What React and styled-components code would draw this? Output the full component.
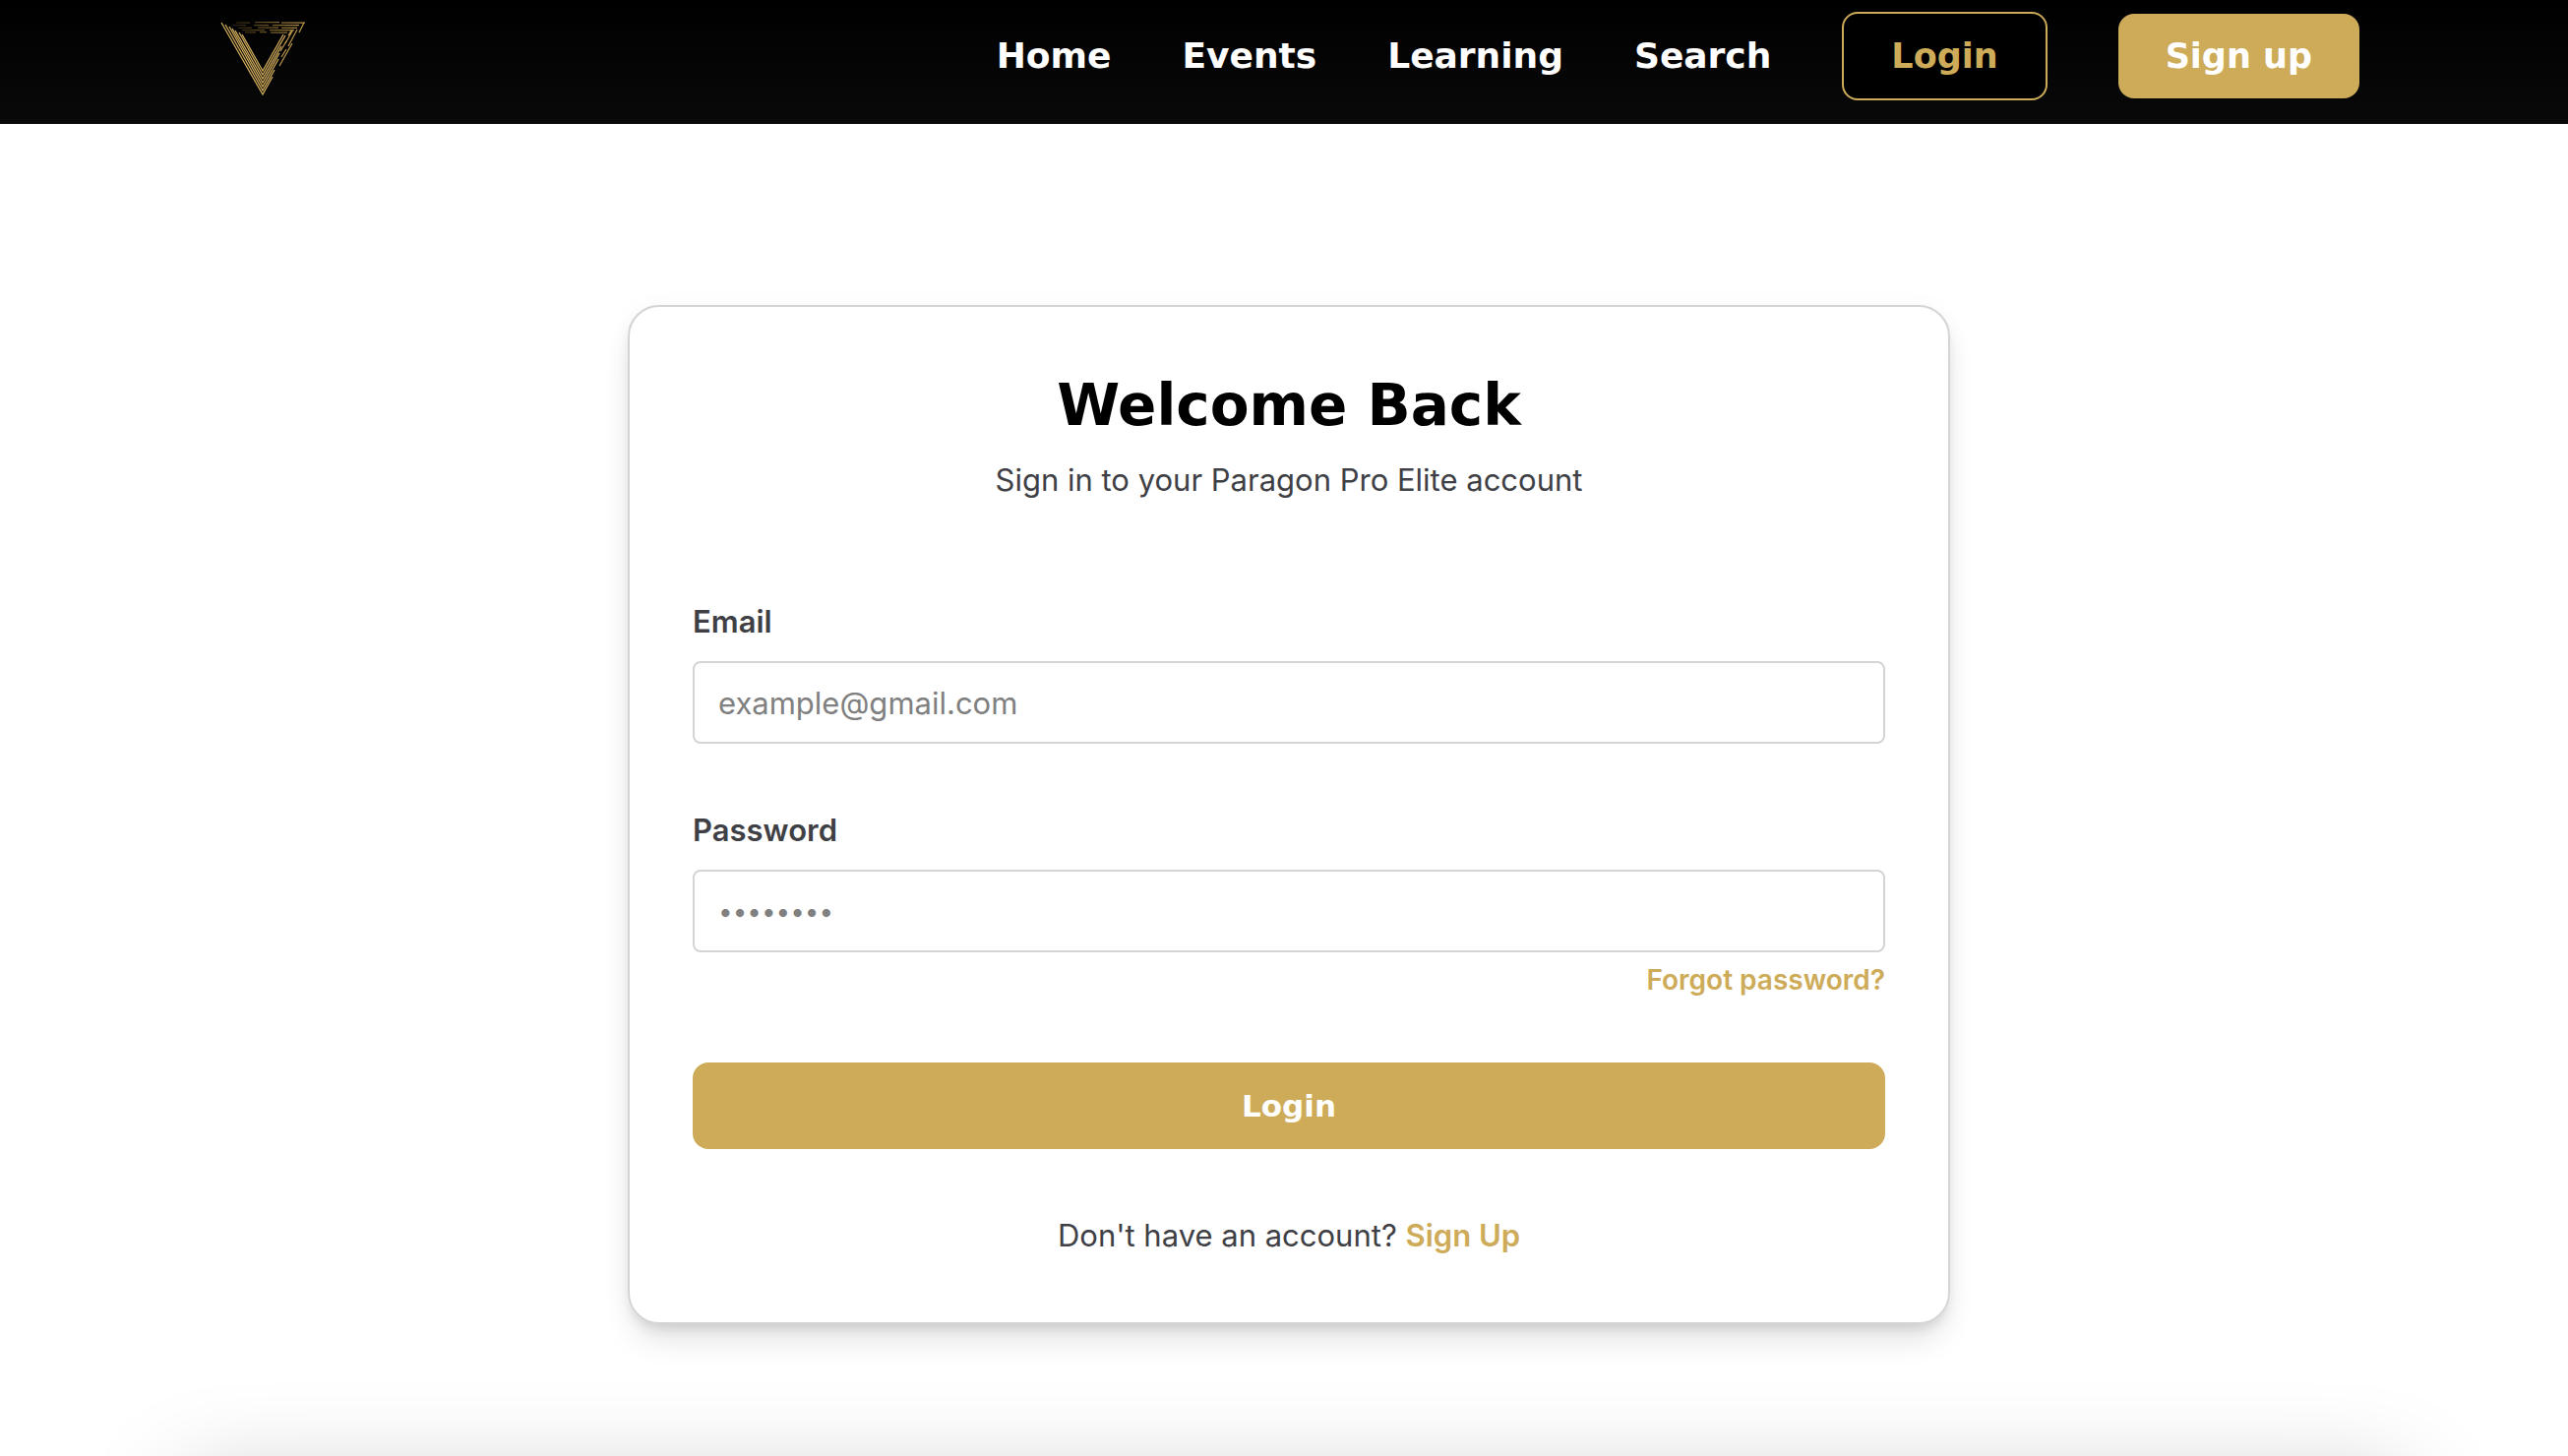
import React from "react";
import styled, { createGlobalStyle, css } from "styled-components";

const gold = "#cdab58";
const ink = "#3f3f46";
const display = '"DejaVu Sans", Verdana, sans-serif';

const GlobalStyle = createGlobalStyle`
  *, *::before, *::after { box-sizing: border-box; }
  body { margin: 0; background: #fff; color: ${ink}; font: 400 31px/48px Inter, "Open Sans", sans-serif; }
`;

const Page = styled.div`
  display: flex;
  flex-direction: column;
  min-height: 100vh;
  overflow: hidden;
`;

const Header = styled.header`
  display: flex;
  align-items: flex-start;
  justify-content: space-between;
  padding: 12px 212px 24px 222px;
  background: linear-gradient(#000, #090909);
`;

const LogoLink = styled.a`
  display: flex;
  svg { display: block; width: 90px; height: 90px; }
`;

const Nav = styled.nav`
  display: flex;
  align-items: center;
  gap: 72px;
  font: 700 36px/46px ${display};
`;

const NavLink = styled.a`
  color: #fff;
  text-decoration: none;
`;

const NavButton = styled.button`
  padding: 20px 48px;
  border: 0;
  border-radius: 16px;
  background: ${gold};
  color: #fff;
  font: 700 35px/46px ${display};
  cursor: pointer;
  ${(p) => p.$outline && css`
    border: 2px solid ${gold};
    background: #000;
    color: ${gold};
  `}
`;

const Main = styled.main`
  display: flex;
  justify-content: center;
  padding: 184px 24px 0 34px;
`;

const Card = styled.form`
  display: flex;
  flex-direction: column;
  width: 100%;
  max-width: 1344px;
  padding: 64px;
  border: 2px solid #d4d4d4;
  border-radius: 32px;
  box-shadow: 0 20px 32px -6px rgba(0, 0, 0, 0.12), 0 8px 12px -4px rgba(0, 0, 0, 0.1), 0 0 24px rgba(0, 0, 0, 0.03);
`;

const Title = styled.h1`
  margin: 0;
  color: #000;
  font: 700 58px/72px ${display};
  text-align: center;
`;

const Centered = styled.p`
  margin: 0;
  text-align: center;
`;

const Intro = styled(Centered)`
  margin: 16px 0 96px;
`;

const Field = styled.div`
  display: flex;
  flex-direction: column;
  gap: 16px;
  margin-bottom: ${(p) => (p.$last ? 0 : 64)}px;
`;

const Label = styled.label`
  font-weight: 600;
`;

const Input = styled.input`
  width: 100%;
  height: 84px;
  padding: 0 24px;
  border: 2px solid #d4d4d4;
  border-radius: 8px;
  background: #fff;
  color: ${ink};
  font: inherit;
  &::placeholder { color: #808080; opacity: 1; }
  &[type="password"] { font-size: 26px; }
`;

const TextLink = styled.a`
  color: ${gold};
  font-weight: 600;
  text-decoration: none;
`;

const ForgotLink = styled(TextLink)`
  align-self: flex-end;
  margin: 8px 0 64px;
  font-size: 28px;
  line-height: 40px;
`;

const Submit = styled.button`
  height: 88px;
  margin-bottom: 64px;
  border: 0;
  border-radius: 16px;
  background: ${gold};
  color: #fff;
  font: 700 31px/48px ${display};
  cursor: pointer;
`;

const NextSection = styled.div`
  height: 200px;
  margin: auto 170px -230px 190px;
  box-shadow: 0 0 100px rgba(0, 0, 0, 0.25);
`;

const Logo = () => (
  <svg viewBox="222 12 90 90" fill="none" strokeWidth="1.25" aria-hidden="true">
    <defs>
      <linearGradient id="topFade" gradientUnits="userSpaceOnUse" x1="236" y1="0" x2="310" y2="0">
        <stop offset="0" stopColor="#241b0a" />
        <stop offset="0.5" stopColor="#6b5426" />
        <stop offset="1" stopColor="#b8954a" />
      </linearGradient>
    </defs>
    <g stroke="#d3ae5d">
      <path d="M225 23L267 96L277 78" />
      <path d="M229 25L267 92L279 71" />
      <path d="M233 27L267 88L283 60" />
      <path d="M236 29L267 84L284 54" />
      <path d="M239 31L267 80L286 47" />
      <path d="M243 33L267 76L290 36" />
      <path d="M246 35L267 72L288 35" />
    </g>
    <g stroke="#b8954a">
      <path d="M284 67L297 44M304 33L309 23" />
      <path d="M286 58L291 50M293 47L302 30M285 52L291 42" />
      <path d="M290 44L298 30M293 36L297 30" />
    </g>
    <g stroke="url(#topFade)">
      <path d="M240 23H254M259 22.6H284M286 23H310" />
      <path d="M237 25.6H250M258 25.5H273M277 25.6H304" />
      <path d="M242 28.3H256M262 28.2H283M286 28.3H302" />
      <path d="M246 30.6H269M274 30.5H299" />
      <path d="M249 32.8H260M264 32.7H271M275 33.2H292" />
    </g>
  </svg>
);

export default function App() {
  return (
    <>
      <GlobalStyle />
      <Page>
        <Header>
          <LogoLink href="#" aria-label="Paragon Pro Elite"><Logo /></LogoLink>
          <Nav>
            {["Home", "Events", "Learning", "Search"].map((name) => (
              <NavLink key={name} href="#">{name}</NavLink>
            ))}
            <NavButton type="button" $outline>Login</NavButton>
            <NavButton type="button">Sign up</NavButton>
          </Nav>
        </Header>
        <Main>
          <Card onSubmit={(e) => e.preventDefault()}>
            <Title>Welcome Back</Title>
            <Intro>Sign in to your Paragon Pro Elite account</Intro>
            <Field>
              <Label htmlFor="email">Email</Label>
              <Input id="email" type="email" placeholder="example@gmail.com" />
            </Field>
            <Field $last>
              <Label htmlFor="password">Password</Label>
              <Input id="password" type="password" placeholder="••••••••" />
            </Field>
            <ForgotLink href="#">Forgot password?</ForgotLink>
            <Submit type="submit">Login</Submit>
            <Centered>Don't have an account? <TextLink href="#">Sign Up</TextLink></Centered>
          </Card>
        </Main>
        <NextSection />
      </Page>
    </>
  );
}
